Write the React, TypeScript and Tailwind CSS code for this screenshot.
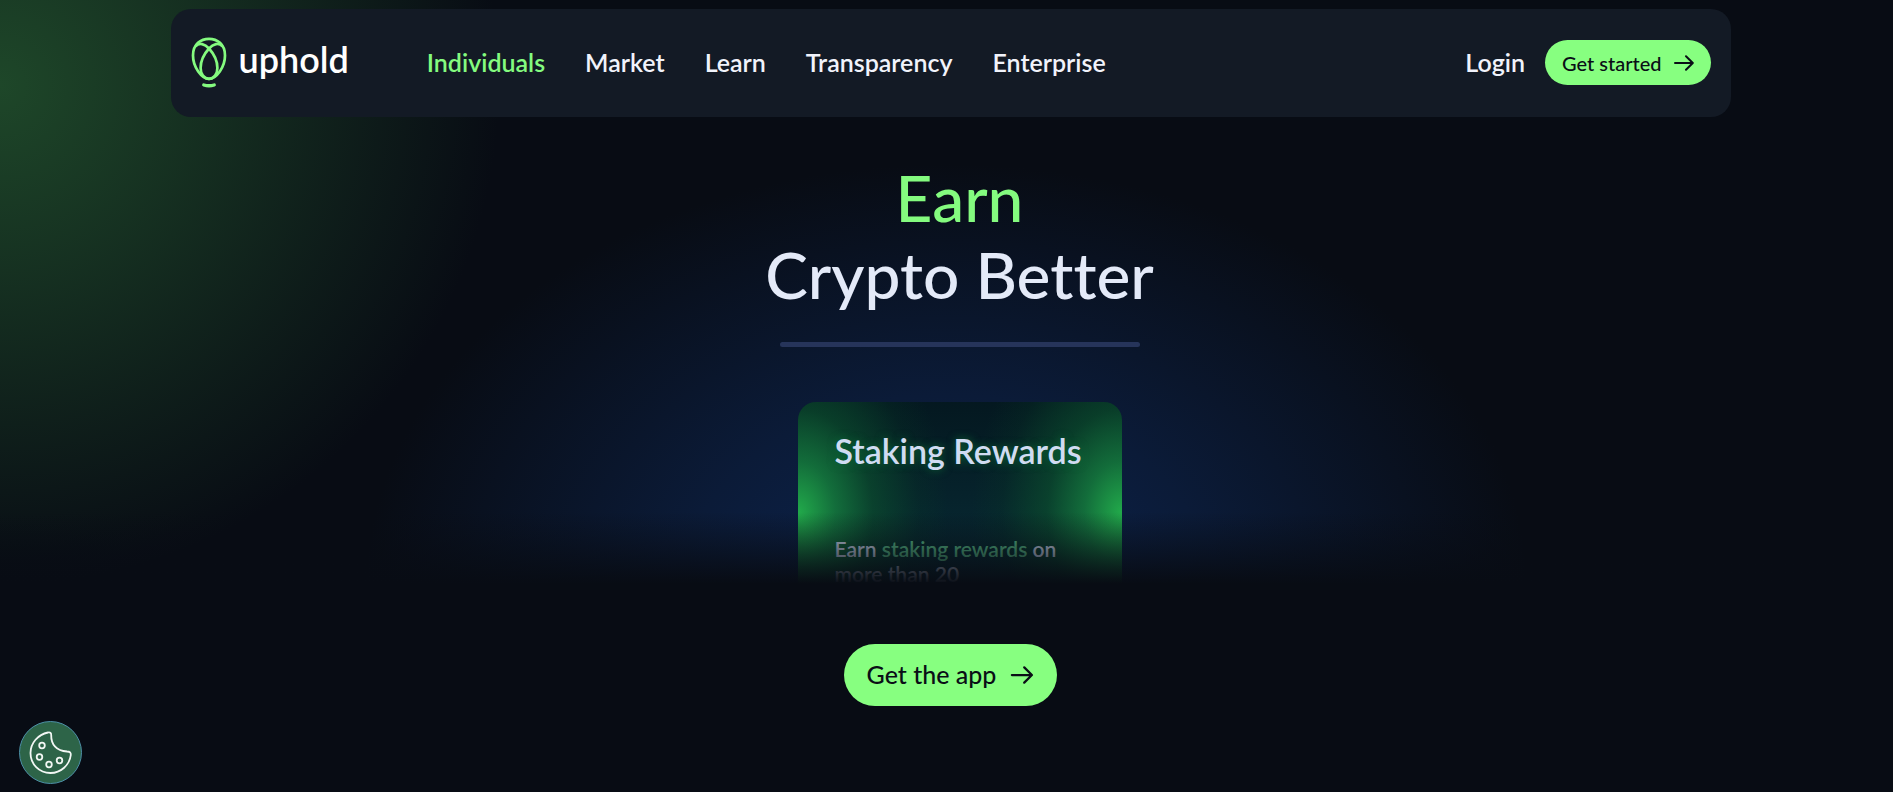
const NAV_LINKS = ["Individuals", "Market", "Learn", "Transparency", "Enterprise"];

function Arrow({ className }: { className: string }) {
  return (
    <svg className={className} viewBox="0 0 20 16" fill="none" stroke="currentColor" strokeWidth={2} strokeLinecap="round" strokeLinejoin="round">
      <path d="M1 8H18.5M12 1.2L18.8 8L12 14.8" />
    </svg>
  );
}

function Logo() {
  return (
    <a href="#" aria-label="uphold" className="flex items-center gap-3 text-white">
      <svg className="h-[54px] w-9" viewBox="0 0 36 54" fill="none" stroke="#84fb7f" strokeWidth={2.7}>
        <path d="M18 2.8C26 2.8 34 8 34 19.5C34 31 25.5 42.8 18 42.8C10.5 42.8 2 31 2 19.5C2 8 10 2.8 18 2.8Z" />
        <path d="M4.5 10.5C8 6 14 8 18 12.5C23 18 26.4 26 26.4 32C26.4 38 23 42.8 18 42.8" />
        <path d="M31.5 10.5C28 6 22 8 18 12.5C13 18 9.6 26 9.6 32C9.6 38 13 42.8 18 42.8" />
        <path d="M12.8 49Q18 50.6 23.2 49" strokeWidth={3.4} strokeLinecap="round" />
      </svg>
      <span className="pb-2 text-[36px] leading-10 font-semibold">uphold</span>
    </a>
  );
}

function Header() {
  return (
    <header className="flex h-[108px] w-full max-w-[1560px] items-center rounded-[20px] bg-[#131a25] px-5 pb-px">
      <Logo />
      <nav className="ml-[78px] flex flex-1 items-center gap-10 text-[25px] font-semibold text-[#f1f3fb]">
        {NAV_LINKS.map((l, i) => (
          <a key={l} href="#" className={i === 0 ? "text-[#84fb7f]" : ""}>{l}</a>
        ))}
      </nav>
      <a href="#" className="mr-5 text-[25px] font-semibold text-[#f1f3fb]">Login</a>
      <button className="flex h-[45px] items-center gap-3 rounded-full bg-[#87ff80] px-[17px] text-xl font-medium text-[#0a0e16]">
        Get started
        <Arrow className="h-4 w-5" />
      </button>
    </header>
  );
}

function StakingCard() {
  return (
    <article className="h-[182px] w-[324px] rounded-t-[18px] bg-[radial-gradient(ellipse_150px_210px_at_0_112px,#22ab4b_0,#16803fcc_25%,#0c552e99_50%,#08402633_80%,#08402600_100%),radial-gradient(ellipse_150px_210px_at_100%_112px,#22ab4b_0,#16803fcc_25%,#0c552e99_50%,#08402633_80%,#08402600_100%),linear-gradient(#041820,#082c36)] px-[37px] pt-[29px]">
      <h2 className="text-[34px] leading-10 font-semibold whitespace-nowrap text-[#d0dcf2] [text-shadow:0_0_8px_#0b6a35]">Staking Rewards</h2>
      <p className="mt-[65px] text-[21px] leading-[25px] font-semibold whitespace-nowrap text-[#d0dcf2]">
        Earn <span className="text-[#5cc58e]">staking rewards</span> on
        <br />
        more than 20
      </p>
    </article>
  );
}

function CookieButton() {
  return (
    <button aria-label="Cookie settings" className="fixed bottom-2 left-[19px] flex size-[63px] items-center justify-center rounded-full border border-[#4d90a8] bg-[#2d6448]">
      <svg className="size-[43px]" viewBox="0 0 43 43" fill="none" stroke="#f2f7f4" strokeWidth={1.8}>
        <path d="M19 1.5C21 1 22.3 2 22.2 4C22 13 27 20 38 20.5C41 20.5 42 21.5 41.8 24C40.5 34 32 42 21.5 42C10 42 1.5 33 1.5 22C1.5 12 9 3.5 19 1.5Z" />
        <circle cx="13" cy="14.5" r="2.8" />
        <circle cx="10.5" cy="26" r="2.8" />
        <circle cx="20" cy="33.5" r="2.8" />
        <circle cx="30.5" cy="29.5" r="2.8" />
      </svg>
    </button>
  );
}

export default function App() {
  return (
    <div className="min-h-screen overflow-hidden bg-[#080c14] bg-[radial-gradient(circle_at_0_85px,#1e4729_0,#080c1400_500px)] font-[Lato,sans-serif]">
      <div className="flex flex-col items-center pt-[9px] pl-2">
        <Header />
      </div>
      <main className="flex flex-col items-center">
        <section className="relative flex w-full flex-col items-center bg-[radial-gradient(ellipse_580px_420px_at_50%_100%,#0c2450_0,#0b1b38_45%,#080c1400_100%)] pt-[42px] pl-[26px]">
          <h1 className="text-center text-[64px] leading-[77px] font-medium text-[#e4eaf8] [font-variant-ligatures:none]">
            <span className="block text-[#84fb7f]">Earn</span>
            Crypto Better
          </h1>
          <div className="mt-[29px] mb-[55px] h-[5px] w-[360px] rounded-full bg-[#26345a]" />
          <StakingCard />
          <div className="absolute inset-x-0 bottom-0 h-[72px] bg-linear-to-b from-transparent to-[#080c14]" />
        </section>
        <div className="pt-[60px] pl-2">
          <button className="flex h-[62px] items-center gap-[14px] rounded-full bg-[#87ff80] px-[23px] text-[25px] font-medium text-[#0a0e16]">
            Get the app
            <Arrow className="h-[18px] w-6" />
          </button>
        </div>
      </main>
      <CookieButton />
    </div>
  );
}
